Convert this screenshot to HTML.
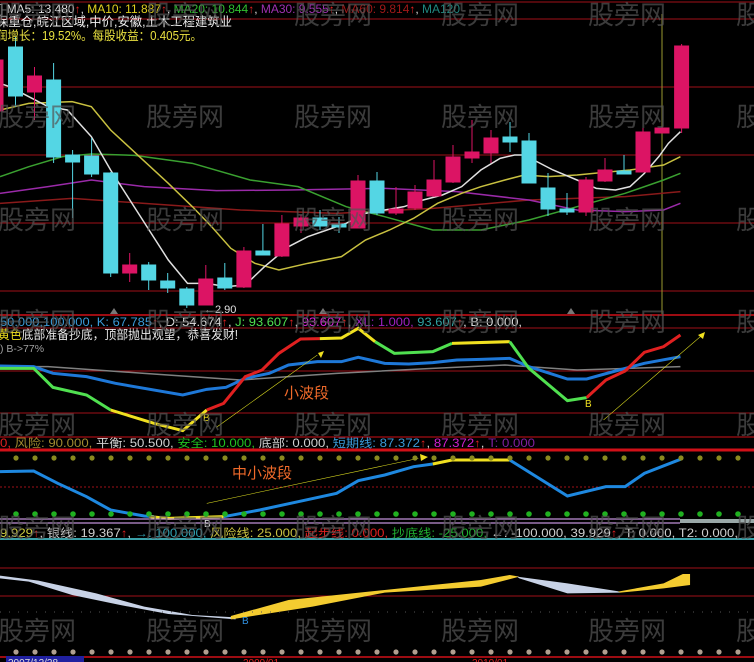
<!DOCTYPE html>
<html><head><meta charset="utf-8"><style>
html,body{margin:0;padding:0;background:#000;}
svg{display:block;font-family:"Liberation Sans","Noto Sans CJK SC",sans-serif;}
.c{fill:#54d6e4;stroke:#54d6e4}
.p{fill:#dc1464;stroke:#dc1464}
.w{fill:none;stroke-width:1.5;vector-effect:non-scaling-stroke}
.t{fill:none;stroke-width:3;vector-effect:non-scaling-stroke}
.wm{fill:#555;opacity:.7;font-size:26px}
</style></head><body>
<svg width="754" height="662" viewBox="0 0 754 662">
<rect width="754" height="662" fill="#000"/>
<g stroke="#a01018" stroke-width="1">
<line x1="0" y1="2" x2="754" y2="2"/>
<line x1="0" y1="19" x2="754" y2="19"/>
<line x1="0" y1="87" x2="754" y2="87"/>
<line x1="0" y1="155" x2="754" y2="155"/>
<line x1="0" y1="223" x2="754" y2="223"/>
<line x1="0" y1="291" x2="754" y2="291"/>
<line x1="0" y1="328" x2="754" y2="328"/>
<line x1="0" y1="371" x2="754" y2="371"/>
<line x1="0" y1="413" x2="754" y2="413"/>
<line x1="0" y1="487" x2="754" y2="487" stroke-dasharray="2,2"/>
<line x1="0" y1="568" x2="754" y2="568"/>
<line x1="0" y1="596" x2="754" y2="596"/>
</g>
<g stroke="#d01018">
<line x1="0" y1="315" x2="754" y2="315" stroke-width="1.5"/>
<line x1="0" y1="437" x2="754" y2="437"/>
<line x1="0" y1="450" x2="754" y2="450" stroke-width="3"/>
<line x1="0" y1="657" x2="754" y2="657" stroke-width="1.5"/>
</g>
<line x1="662" y1="14" x2="662" y2="314" stroke="#9a9a30"/>
<g transform="scale(0.48087,0.33333)">
<polyline class="w" stroke="#8a1a1a" points="0,610 150,595 300,610 500,630 700,640 900,625 1100,600 1300,590 1415,575"/>
<polyline class="w" stroke="#9a2aa8" points="0,580 100,560 190,540 300,560 450,572 600,570 800,565 950,575 1100,600 1200,630 1300,635 1380,630 1415,610"/>
<polyline class="w" stroke="#3aa030" points="0,530 60,500 130,470 190,462 280,466 400,490 520,540 620,560 720,620 800,650 900,690 1000,690 1100,660 1200,620 1300,580 1380,540 1415,520"/>
<polyline class="w" stroke="#c8c040" points="0,330 60,310 150,305 190,320 230,390 290,470 350,550 400,620 440,680 480,745 530,790 580,810 640,790 710,770 760,720 810,690 860,655 910,610 960,580 1000,560 1050,540 1090,525 1140,530 1200,525 1250,518 1310,510 1380,495 1415,470"/>
<polyline class="w" stroke="#e0e0e0" points="0,250 20,260 60,290 100,320 140,330 190,410 230,510 270,600 310,690 350,780 390,850 430,850 470,860 510,855 550,800 600,740 640,710 680,690 720,670 760,640 800,630 840,620 880,600 920,585 960,560 1000,510 1040,475 1070,465 1090,465 1110,480 1150,510 1200,540 1240,565 1280,570 1310,560 1340,520 1370,470 1390,430 1415,395"/>
</g>
<g stroke-width="1">
<rect class="p" x="-11" y="60" width="14" height="51"/>
<line class="c" x1="15.5" y1="37" x2="15.5" y2="107"/><rect class="c" x="8.5" y="47" width="14" height="49"/>
<line class="p" x1="34.5" y1="67" x2="34.5" y2="120"/><rect class="p" x="27.5" y="76" width="14" height="16"/>
<line class="c" x1="53.6" y1="63" x2="53.6" y2="163"/><rect class="c" x="46.6" y="80" width="14" height="77"/>
<line class="c" x1="72.6" y1="150" x2="72.6" y2="218"/><rect class="c" x="65.6" y="155" width="14" height="7"/>
<line class="c" x1="91.6" y1="138" x2="91.6" y2="177"/><rect class="c" x="84.6" y="156" width="14" height="18"/>
<line class="c" x1="110.7" y1="172" x2="110.7" y2="277"/><rect class="c" x="103.7" y="173" width="14" height="100"/>
<line class="p" x1="129.7" y1="253" x2="129.7" y2="282"/><rect class="p" x="122.7" y="265" width="14" height="8"/>
<line class="c" x1="148.7" y1="262" x2="148.7" y2="290"/><rect class="c" x="141.7" y="265" width="14" height="15"/>
<line class="c" x1="167.7" y1="273" x2="167.7" y2="293"/><rect class="c" x="160.7" y="281" width="14" height="7"/>
<line class="c" x1="186.8" y1="287" x2="186.8" y2="308"/><rect class="c" x="179.8" y="289" width="14" height="16"/>
<line class="p" x1="205.8" y1="265" x2="205.8" y2="305"/><rect class="p" x="198.8" y="279" width="14" height="26"/>
<line class="c" x1="224.8" y1="263" x2="224.8" y2="290"/><rect class="c" x="217.8" y="278" width="14" height="10"/>
<line class="p" x1="243.9" y1="247" x2="243.9" y2="288"/><rect class="p" x="236.9" y="251" width="14" height="36"/>
<line class="c" x1="262.9" y1="224" x2="262.9" y2="255"/><rect class="c" x="255.9" y="251" width="14" height="4"/>
<line class="p" x1="281.9" y1="215" x2="281.9" y2="257"/><rect class="p" x="274.9" y="224" width="14" height="32"/>
<line class="p" x1="301" y1="215" x2="301" y2="233"/><rect class="p" x="294" y="218" width="14" height="8"/>
<line class="c" x1="320" y1="210" x2="320" y2="230"/><rect class="c" x="313" y="218" width="14" height="8"/>
<line class="c" x1="339" y1="217" x2="339" y2="233"/><rect class="c" x="332" y="224" width="14" height="3"/>
<line class="p" x1="358" y1="175" x2="358" y2="228"/><rect class="p" x="351" y="181" width="14" height="47"/>
<line class="c" x1="377" y1="172" x2="377" y2="215"/><rect class="c" x="370" y="181" width="14" height="32"/>
<line class="p" x1="396" y1="187" x2="396" y2="215"/><rect class="p" x="389" y="209" width="14" height="4"/>
<line class="p" x1="415" y1="185" x2="415" y2="210"/><rect class="p" x="408" y="192" width="14" height="16"/>
<line class="p" x1="434" y1="160" x2="434" y2="197"/><rect class="p" x="427" y="180" width="14" height="16"/>
<line class="p" x1="453" y1="145" x2="453" y2="183"/><rect class="p" x="446" y="157" width="14" height="25"/>
<line class="p" x1="472" y1="120" x2="472" y2="163"/><rect class="p" x="465" y="152" width="14" height="6"/>
<line class="p" x1="491" y1="130" x2="491" y2="163"/><rect class="p" x="484" y="138" width="14" height="15"/>
<line class="c" x1="510" y1="122" x2="510" y2="152"/><rect class="c" x="503" y="137" width="14" height="5"/>
<line class="c" x1="529" y1="133" x2="529" y2="183"/><rect class="c" x="522" y="141" width="14" height="42"/>
<line class="c" x1="548" y1="173" x2="548" y2="216"/><rect class="c" x="541" y="188" width="14" height="21"/>
<line class="c" x1="567" y1="193" x2="567" y2="215"/><rect class="c" x="560" y="209" width="14" height="3"/>
<line class="p" x1="586" y1="177" x2="586" y2="216"/><rect class="p" x="579" y="180" width="14" height="32"/>
<line class="p" x1="605" y1="158" x2="605" y2="182"/><rect class="p" x="598" y="170" width="14" height="11"/>
<line class="c" x1="624" y1="155" x2="624" y2="174"/><rect class="c" x="617" y="171" width="14" height="3"/>
<line class="p" x1="643" y1="128" x2="643" y2="172"/><rect class="p" x="636" y="132" width="14" height="40"/>
<line class="p" x1="662" y1="127" x2="662" y2="133"/><rect class="p" x="655" y="128" width="14" height="5"/>
<line class="p" x1="681.6" y1="44" x2="681.6" y2="133"/><rect class="p" x="674.6" y="46" width="14" height="82"/>
</g>
<text x="204" y="313" fill="#e0e0e0" font-size="11">←2.90</text>
<g fill="#777"><polygon points="110,314 114,308 118,314"/><polygon points="319,314 323,308 327,314"/><polygon points="567,314 571,308 575,314"/></g>
<g transform="translate(0,310) scale(0.48087,0.33333)">
<polyline class="w" stroke="#808080" points="0,170 100,170 300,190 500,210 700,190 900,175 1050,165 1200,180 1415,170"/>
<polyline class="t" stroke="#1e78d8" points="0,168 70,170 110,190 180,200 240,220 380,255 430,238 470,232 510,205 560,190 600,165 660,155 710,155 745,142 800,160 850,162 900,158 950,150 1000,148 1060,145 1100,170 1180,207 1220,207 1280,183 1340,160 1415,140"/>
<polyline class="t" stroke="#50e050" points="0,175 70,175 110,232 180,255 230,300"/>
<polyline class="t" stroke="#f0e020" points="230,300 320,340 380,362 430,300"/>
<polyline class="t" stroke="#e02020" points="430,300 465,280 510,200 545,180 580,130 625,87 665,86"/>
<polyline class="t" stroke="#f0e020" points="665,86 710,84 745,55 780,95"/>
<polyline class="t" stroke="#50e050" points="780,95 820,130 900,125 940,100"/>
<polyline class="t" stroke="#f0e020" points="940,100 1060,95"/>
<polyline class="t" stroke="#50e050" points="1060,95 1100,175 1180,272 1220,263"/>
<polyline class="t" stroke="#e02020" points="1220,263 1260,210 1300,183 1340,127 1380,110 1415,75"/>
<g stroke="#e0e020" class="w">
<line x1="450" y1="352" x2="660" y2="135"/><line x1="1255" y1="330" x2="1458" y2="78"/>
<line x1="430" y1="580" x2="870" y2="445"/>
</g>
<polyline class="t" stroke="#1e88e0" points="0,485 70,483 120,520 180,560 230,600 300,618 320,620"/>
<polyline class="t" stroke="#f0e020" points="310,620 350,625 465,620"/>
<polyline class="t" stroke="#1e88e0" points="465,620 540,600 620,575 700,550 745,512 800,495 860,470 900,462"/>
<polyline class="t" stroke="#f0e020" points="900,462 940,450 1060,450"/>
<polyline class="t" stroke="#1e88e0" points="1060,450 1180,558 1260,530 1300,530 1340,490 1415,448"/>
<polygon fill="#c8d2e6" points="0,797 80,812 200,850 300,890 400,915 490,922 490,928 350,912 250,885 150,855 60,815 0,805"/>
<polygon fill="#f4cc30" points="480,918 600,870 800,840 1000,810 1060,795 1080,800 1000,830 800,848 650,890 480,928"/>
<polygon fill="#c8d2e6" points="1075,800 1180,820 1290,845 1290,848 1180,850 1080,805"/>
<polygon fill="#f4cc30" points="1285,845 1380,820 1420,792 1435,792 1435,825 1380,835 1290,848"/>
</g>
<g fill="#f0e020"><polygon points="324,351 318,353 321,358"/><polygon points="705,332 698,335 703,339"/><polygon points="428,457 420,454 421,461"/></g>
<g fill="#8a8a20">
<circle cx="16" cy="458" r="2.6"/><circle cx="35" cy="458" r="2.6"/><circle cx="54" cy="458" r="2.6"/><circle cx="73" cy="458" r="2.6"/><circle cx="92" cy="458" r="2.6"/><circle cx="111" cy="458" r="2.6"/><circle cx="130" cy="458" r="2.6"/><circle cx="149" cy="458" r="2.6"/><circle cx="168" cy="458" r="2.6"/><circle cx="187" cy="458" r="2.6"/><circle cx="206" cy="458" r="2.6"/><circle cx="225" cy="458" r="2.6"/><circle cx="244" cy="458" r="2.6"/><circle cx="263" cy="458" r="2.6"/><circle cx="282" cy="458" r="2.6"/><circle cx="301" cy="458" r="2.6"/><circle cx="320" cy="458" r="2.6"/><circle cx="339" cy="458" r="2.6"/><circle cx="358" cy="458" r="2.6"/><circle cx="377" cy="458" r="2.6"/><circle cx="396" cy="458" r="2.6"/><circle cx="415" cy="458" r="2.6"/><circle cx="434" cy="458" r="2.6"/><circle cx="453" cy="458" r="2.6"/><circle cx="472" cy="458" r="2.6"/><circle cx="491" cy="458" r="2.6"/><circle cx="510" cy="458" r="2.6"/><circle cx="529" cy="458" r="2.6"/><circle cx="548" cy="458" r="2.6"/><circle cx="567" cy="458" r="2.6"/><circle cx="586" cy="458" r="2.6"/><circle cx="605" cy="458" r="2.6"/><circle cx="624" cy="458" r="2.6"/><circle cx="643" cy="458" r="2.6"/><circle cx="662" cy="458" r="2.6"/><circle cx="681" cy="458" r="2.6"/><circle cx="700" cy="458" r="2.6"/><circle cx="719" cy="458" r="2.6"/><circle cx="738" cy="458" r="2.6"/>
</g>
<g fill="#20b020" transform="translate(0,56)">
<circle cx="16" cy="458" r="2.8"/><circle cx="35" cy="458" r="2.8"/><circle cx="54" cy="458" r="2.8"/><circle cx="73" cy="458" r="2.8"/><circle cx="92" cy="458" r="2.8"/><circle cx="111" cy="458" r="2.8"/><circle cx="130" cy="458" r="2.8"/><circle cx="149" cy="458" r="2.8"/><circle cx="168" cy="458" r="2.8"/><circle cx="187" cy="458" r="2.8"/><circle cx="206" cy="458" r="2.8"/><circle cx="225" cy="458" r="2.8"/><circle cx="244" cy="458" r="2.8"/><circle cx="263" cy="458" r="2.8"/><circle cx="282" cy="458" r="2.8"/><circle cx="301" cy="458" r="2.8"/><circle cx="320" cy="458" r="2.8"/><circle cx="339" cy="458" r="2.8"/><circle cx="358" cy="458" r="2.8"/><circle cx="377" cy="458" r="2.8"/><circle cx="396" cy="458" r="2.8"/><circle cx="415" cy="458" r="2.8"/><circle cx="434" cy="458" r="2.8"/><circle cx="453" cy="458" r="2.8"/><circle cx="472" cy="458" r="2.8"/><circle cx="491" cy="458" r="2.8"/><circle cx="510" cy="458" r="2.8"/><circle cx="529" cy="458" r="2.8"/><circle cx="548" cy="458" r="2.8"/><circle cx="567" cy="458" r="2.8"/><circle cx="586" cy="458" r="2.8"/><circle cx="605" cy="458" r="2.8"/><circle cx="624" cy="458" r="2.8"/><circle cx="643" cy="458" r="2.8"/><circle cx="662" cy="458" r="2.8"/><circle cx="681" cy="458" r="2.8"/><circle cx="700" cy="458" r="2.8"/><circle cx="719" cy="458" r="2.8"/><circle cx="738" cy="458" r="2.8"/>
</g>
<g fill="#b0a090" transform="translate(0,194)">
<circle cx="16" cy="458" r="2.6"/><circle cx="35" cy="458" r="2.6"/><circle cx="54" cy="458" r="2.6"/><circle cx="73" cy="458" r="2.6"/><circle cx="92" cy="458" r="2.6"/><circle cx="111" cy="458" r="2.6"/><circle cx="130" cy="458" r="2.6"/><circle cx="149" cy="458" r="2.6"/><circle cx="168" cy="458" r="2.6"/><circle cx="187" cy="458" r="2.6"/><circle cx="206" cy="458" r="2.6"/><circle cx="225" cy="458" r="2.6"/><circle cx="244" cy="458" r="2.6"/><circle cx="263" cy="458" r="2.6"/><circle cx="282" cy="458" r="2.6"/><circle cx="301" cy="458" r="2.6"/><circle cx="320" cy="458" r="2.6"/><circle cx="339" cy="458" r="2.6"/><circle cx="358" cy="458" r="2.6"/><circle cx="377" cy="458" r="2.6"/><circle cx="396" cy="458" r="2.6"/><circle cx="415" cy="458" r="2.6"/><circle cx="434" cy="458" r="2.6"/><circle cx="453" cy="458" r="2.6"/><circle cx="472" cy="458" r="2.6"/><circle cx="491" cy="458" r="2.6"/><circle cx="510" cy="458" r="2.6"/><circle cx="529" cy="458" r="2.6"/><circle cx="548" cy="458" r="2.6"/><circle cx="567" cy="458" r="2.6"/><circle cx="586" cy="458" r="2.6"/><circle cx="605" cy="458" r="2.6"/><circle cx="624" cy="458" r="2.6"/><circle cx="643" cy="458" r="2.6"/><circle cx="662" cy="458" r="2.6"/><circle cx="681" cy="458" r="2.6"/><circle cx="700" cy="458" r="2.6"/><circle cx="719" cy="458" r="2.6"/><circle cx="738" cy="458" r="2.6"/>
</g>
<line x1="0" y1="612" x2="754" y2="612" stroke="#555" stroke-dasharray="1,8"/>
<line x1="0" y1="519" x2="680" y2="519" stroke="#c090d8" stroke-width="1.2"/>
<line x1="0" y1="523" x2="680" y2="523" stroke="#c090d8" stroke-width="1.2"/>
<line x1="680" y1="521" x2="754" y2="521" stroke="#9aa8a8" stroke-width="4"/>
<line x1="0" y1="539" x2="754" y2="539" stroke="#3aa0a8" stroke-width="2"/>
<text x="284" y="398" fill="#f06a2a" font-size="15">小波段</text>
<text x="232" y="478" fill="#f06a2a" font-size="15">中小波段</text>
<text x="203" y="421" fill="#f0e020" font-size="10">B</text>
<text x="585" y="407" fill="#f0e020" font-size="10">B</text>
<text x="204" y="527" fill="#e0e0e0" font-size="10">B</text>
<text x="242" y="624" fill="#3090e0" font-size="10">B</text>
<g font-size="11.5">
<text x="0" y="13" textLength="460" lengthAdjust="spacingAndGlyphs"><tspan fill="#e0e0e0">] MA5: 13.480</tspan><tspan fill="#e02020">↑</tspan><tspan fill="#e0e0e0">, </tspan><tspan fill="#e0d020">MA10: 11.887</tspan><tspan fill="#e02020">↑</tspan><tspan fill="#e0e0e0">, </tspan><tspan fill="#30c030">MA20: 10.844</tspan><tspan fill="#e02020">↑</tspan><tspan fill="#e0e0e0">, </tspan><tspan fill="#a030b0">MA30: 9.555</tspan><tspan fill="#e02020">↑</tspan><tspan fill="#e0e0e0">, </tspan><tspan fill="#a01818">MA60: 9.814</tspan><tspan fill="#e02020">↑</tspan><tspan fill="#e0e0e0">, </tspan><tspan fill="#208880">MA120</tspan></text>
<text x="-4" y="26" fill="#f0f0f0" font-size="12.5" textLength="236" lengthAdjust="spacingAndGlyphs">保重仓,皖江区域,中价,安徽,土木工程建筑业</text>
<text x="-4" y="40" fill="#e8e040" font-size="12.5" textLength="206" lengthAdjust="spacingAndGlyphs">润增长：19.52%。每股收益：0.405元。</text>
<text x="0" y="326" textLength="522" lengthAdjust="spacingAndGlyphs"><tspan fill="#3a9ad8">50.000,100.000, K: 67.785</tspan><tspan fill="#e02020">↑</tspan><tspan fill="#e0e0e0">, D: 54.674</tspan><tspan fill="#e02020">↑</tspan><tspan fill="#e0e0e0">, </tspan><tspan fill="#50e050">J: 93.607</tspan><tspan fill="#e02020">↑</tspan><tspan fill="#e0e0e0">, </tspan><tspan fill="#e020e0">93.607</tspan><tspan fill="#e02020">↑</tspan><tspan fill="#e0e0e0">, </tspan><tspan fill="#a020c0">XL: 1.000, </tspan><tspan fill="#30a0a0">93.607</tspan><tspan fill="#e02020">↑</tspan><tspan fill="#e0e0e0">, B: 0.000,</tspan></text>
<text x="-2" y="339" font-size="12.5" textLength="240" lengthAdjust="spacingAndGlyphs"><tspan fill="#f0e020">黄色</tspan><tspan fill="#e8e8e8">底部准备抄底，顶部抛出观望，恭喜发财!</tspan></text>
<text x="0" y="352" fill="#a0a0a0" font-size="10.5">) B-&gt;77%</text>
<text x="0" y="447" textLength="535" lengthAdjust="spacingAndGlyphs"><tspan fill="#e02020">0, </tspan><tspan fill="#a08a30">风险: 90.000, </tspan><tspan fill="#d0d0d0">平衡: 50.500, </tspan><tspan fill="#20c020">安全: 10.000, </tspan><tspan fill="#d0d0d0">底部: 0.000, </tspan><tspan fill="#3a9ad8">短期线: 87.372</tspan><tspan fill="#e02020">↑</tspan><tspan fill="#d0d0d0">, </tspan><tspan fill="#d020d0">87.372</tspan><tspan fill="#e02020">↑</tspan><tspan fill="#d0d0d0">, </tspan><tspan fill="#8020a0">T: 0.000</tspan></text>
<text x="0" y="537" textLength="738" lengthAdjust="spacingAndGlyphs"><tspan fill="#d0d040">9.929</tspan><tspan fill="#e02020">↑</tspan><tspan fill="#d0d0d0">, 银线: 19.367</tspan><tspan fill="#e02020">↑</tspan><tspan fill="#d0d0d0">, </tspan><tspan fill="#30a0b0">→: 100.000, </tspan><tspan fill="#c8c040">风险线: 25.000, </tspan><tspan fill="#e02020">起步线: 0.000, </tspan><tspan fill="#20b030">抄底线: -25.000, </tspan><tspan fill="#d0d0d0">←: -100.000, 39.929</tspan><tspan fill="#e02020">↑</tspan><tspan fill="#d0d0d0">, T: 0.000, T2: 0.000,</tspan></text>
</g>
<rect x="6" y="656" width="78" height="8" fill="#2020a0"/>
<text x="8" y="666" fill="#e0e0e0" font-size="10">2007/12/28</text>
<text x="243" y="666" fill="#e02020" font-size="10">2009/01</text>
<text x="472" y="666" fill="#e02020" font-size="10">2010/01</text>
<g class="wm">
<text x="-2" y="24">股旁网</text><text x="146" y="24">股旁网</text><text x="294" y="24">股旁网</text><text x="441" y="24">股旁网</text><text x="588" y="24">股旁网</text><text x="736" y="24">股</text>
<text x="-2" y="126">股旁网</text><text x="146" y="126">股旁网</text><text x="294" y="126">股旁网</text><text x="441" y="126">股旁网</text><text x="588" y="126">股旁网</text><text x="736" y="126">股</text>
<text x="-2" y="229">股旁网</text><text x="146" y="229">股旁网</text><text x="294" y="229">股旁网</text><text x="441" y="229">股旁网</text><text x="588" y="229">股旁网</text><text x="736" y="229">股</text>
<text x="-2" y="331">股旁网</text><text x="146" y="331">股旁网</text><text x="294" y="331">股旁网</text><text x="441" y="331">股旁网</text><text x="588" y="331">股旁网</text><text x="736" y="331">股</text>
<text x="-2" y="434">股旁网</text><text x="146" y="434">股旁网</text><text x="294" y="434">股旁网</text><text x="441" y="434">股旁网</text><text x="588" y="434">股旁网</text><text x="736" y="434">股</text>
<text x="-2" y="537">股旁网</text><text x="146" y="537">股旁网</text><text x="294" y="537">股旁网</text><text x="441" y="537">股旁网</text><text x="588" y="537">股旁网</text><text x="736" y="537">股</text>
<text x="-2" y="640">股旁网</text><text x="146" y="640">股旁网</text><text x="294" y="640">股旁网</text><text x="441" y="640">股旁网</text><text x="588" y="640">股旁网</text><text x="736" y="640">股</text>
</g>
</svg>
</body></html>
